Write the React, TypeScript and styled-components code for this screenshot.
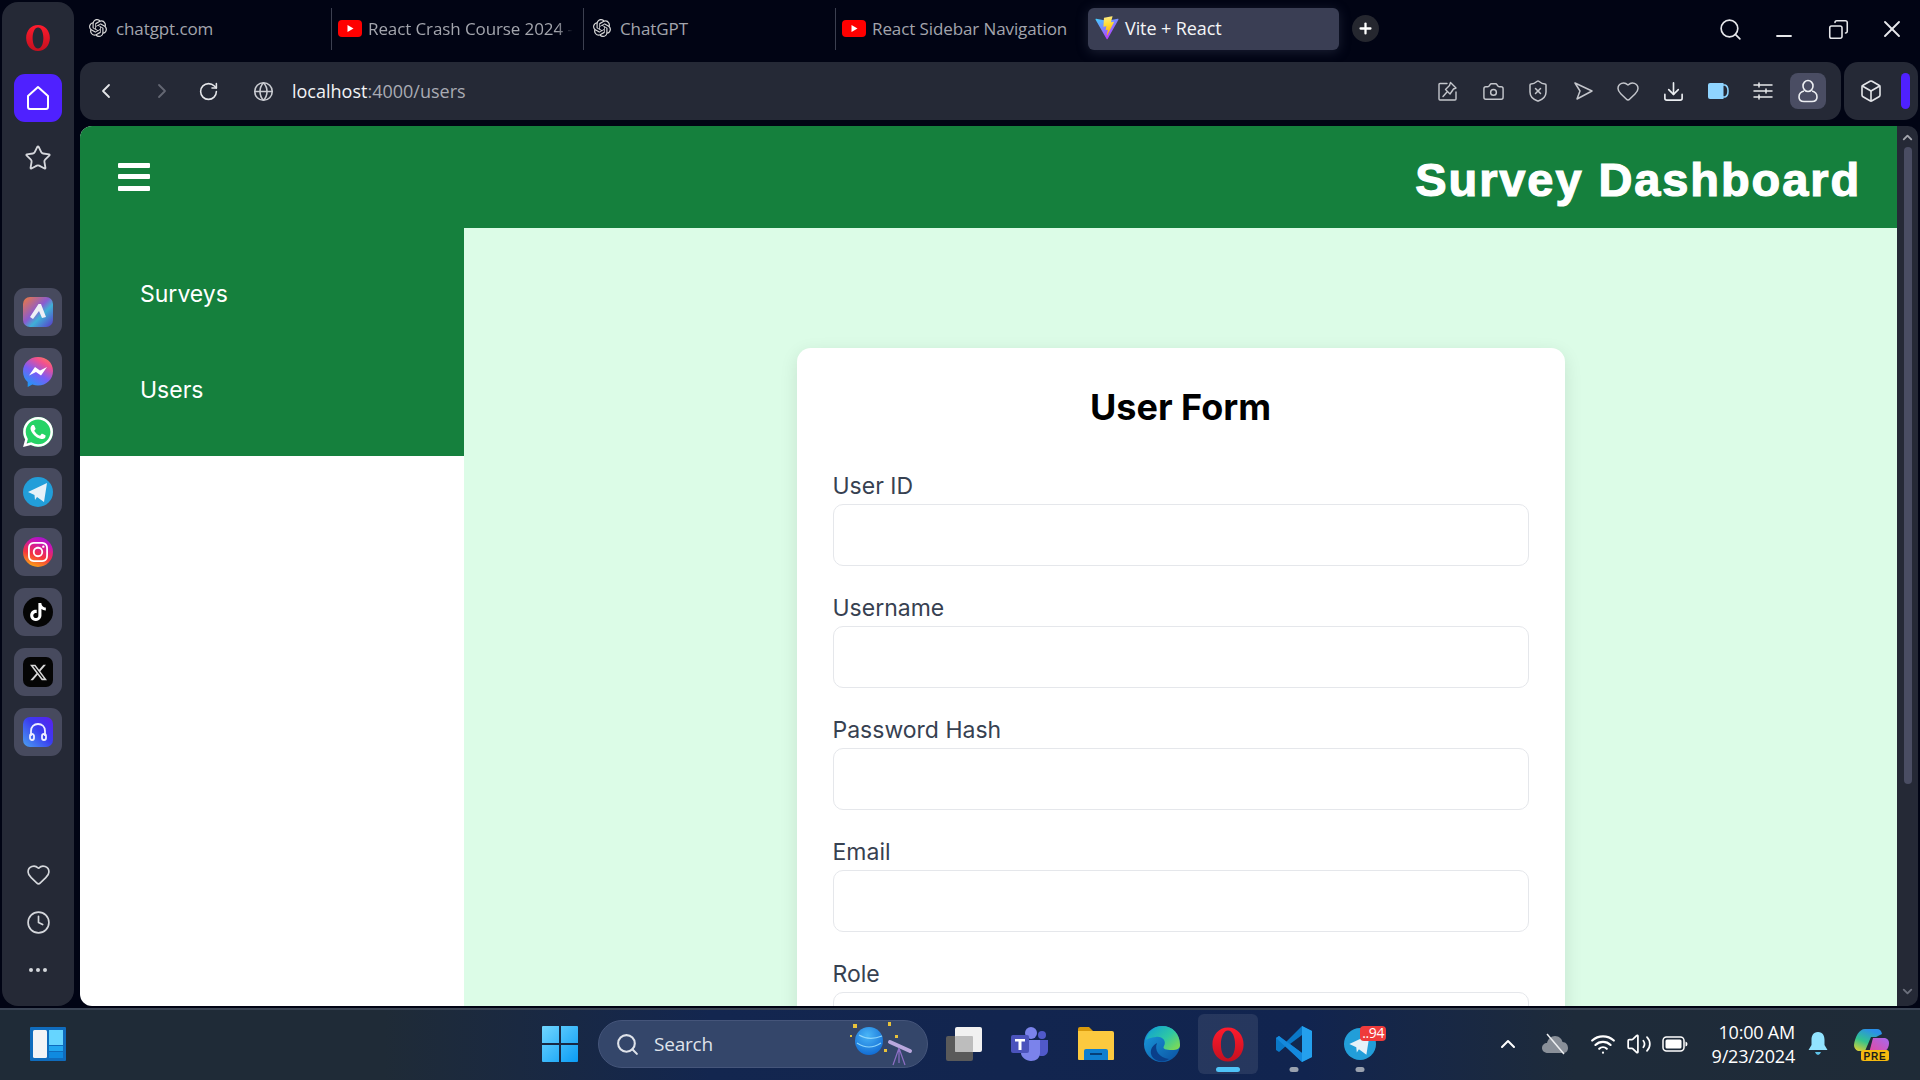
import React from 'react';
import styled, { createGlobalStyle } from 'styled-components';
import {
  Box,
  ChevronDown,
  ChevronLeft,
  ChevronRight,
  ChevronUp,
  Camera,
  Clock,
  Copy,
  Download,
  Globe,
  Heart,
  Minus,
  Plus,
  RotateCw,
  Search,
  ShieldX,
  Star,
  Volume2,
  Wifi,
  X,
} from 'lucide-react';
import { SiOpenai, SiTiktok, SiWhatsapp, SiX, SiInstagram } from 'react-icons/si';

const GlobalStyle = createGlobalStyle`
  html, body {
    margin: 0;
    padding: 0;
    background: #010414;
    overflow: hidden;
  }
  * {
    box-sizing: border-box;
  }
`;

const Screen = styled.div`
  width: 1920px;
  height: 1080px;
  display: flex;
  flex-direction: column;
  overflow: hidden;
  background: #010414;
  font-family: 'Open Sans', 'Liberation Sans', sans-serif;
`;

const Desktop = styled.div`
  height: 1008px;
  display: flex;
  flex-shrink: 0;
`;

/* opera side rail */
const Rail = styled.aside`
  width: 72px;
  height: 1004px;
  margin: 2px 6px 0 2px;
  padding: 12px 0;
  background: #252936;
  border-radius: 16px;
  display: flex;
  flex-direction: column;
  align-items: center;
`;

const RailGroup = styled.div<{ $top?: number; $gap?: number }>`
  display: flex;
  flex-direction: column;
  gap: ${(p) => p.$gap ?? 12}px;
  margin-top: ${(p) => (p.$top === undefined ? 'auto' : `${p.$top}px`)};
`;

const RailSlot = styled.div<{ $active?: boolean; $tile?: boolean }>`
  width: 48px;
  height: 48px;
  display: flex;
  align-items: center;
  justify-content: center;
  border-radius: 11px;
  color: #d5d7dc;
  background: ${(p) => (p.$active ? '#4f21ff' : p.$tile ? '#474a5e' : 'transparent')};
`;

const AppIcon = styled.div<{ $bg: string; $round?: boolean }>`
  width: 30px;
  height: 30px;
  display: flex;
  align-items: center;
  justify-content: center;
  color: #fff;
  background: ${(p) => p.$bg};
  border-radius: ${(p) => (p.$round ? '50%' : '7px')};
`;

const Dots = styled.div`
  display: flex;
  gap: 3px;

  span {
    width: 4px;
    height: 4px;
    border-radius: 50%;
    background: #d5d7dc;
  }
`;

/* browser */
const Browser = styled.div`
  flex: 1;
  min-width: 0;
  display: flex;
  flex-direction: column;
`;

const TabRow = styled.div`
  height: 62px;
  flex-shrink: 0;
  display: flex;
  padding: 8px 1px 0 0;
  margin-left: -1px;
`;

const Tab = styled.div<{ $active?: boolean; $divider?: boolean }>`
  width: ${(p) => (p.$active ? 251 : 252)}px;
  height: 42px;
  margin-left: ${(p) => (p.$active ? 1 : 0)}px;
  padding: 0 6px 2px ${(p) => (p.$active ? 6 : 6)}px;
  display: flex;
  align-items: center;
  gap: 6px;
  font-size: ${(p) => (p.$active ? 18 : 17)}px;
  color: ${(p) => (p.$active ? '#f4f5f7' : '#a3a5ad')};
  background: ${(p) => (p.$active ? '#3a3e54' : 'transparent')};
  border-radius: ${(p) => (p.$active ? '6px' : '0')};
  box-shadow: ${(p) => (p.$active ? '0 2px 12px rgba(60, 64, 88, 0.45)' : 'none')};
  border-left: ${(p) => (p.$divider ? '1px solid #3c4050' : '1px solid transparent')};
`;

const TabIcon = styled.div`
  width: 24px;
  height: 24px;
  flex-shrink: 0;
  display: flex;
  align-items: center;
  justify-content: center;
  color: #d8d8d8;
`;

const TabTitle = styled.span<{ $fade?: boolean }>`
  white-space: nowrap;
  letter-spacing: -0.1px;
  ${(p) => (p.$fade ? 'mask-image: linear-gradient(90deg, #000 92%, transparent 100%);' : '')}
`;

const NewTab = styled.div`
  width: 27px;
  height: 27px;
  margin: 7px 0 0 13px;
  border-radius: 50%;
  background: #25272f;
  color: #fff;
  display: flex;
  align-items: center;
  justify-content: center;
`;

const WindowControls = styled.div`
  margin-left: auto;
  display: flex;
  color: #e6e7ea;
`;

const WindowButton = styled.div`
  width: 54px;
  height: 42px;
  display: flex;
  align-items: center;
  justify-content: center;
`;

const AddressRow = styled.div`
  height: 58px;
  flex-shrink: 0;
  display: flex;
  gap: 3px;
  padding-right: 2px;
`;

const Toolbar = styled.div`
  flex: 1;
  min-width: 0;
  padding: 0 15px 0 14px;
  display: flex;
  align-items: center;
  background: #252936;
  border-radius: 14px;
`;

const NavIcon = styled.div<{ $left?: number; $dim?: boolean }>`
  width: 24px;
  height: 24px;
  margin-left: ${(p) => p.$left ?? 0}px;
  display: flex;
  align-items: center;
  justify-content: center;
  color: ${(p) => (p.$dim ? '#646773' : '#e4e5e9')};
`;

const Url = styled.div`
  margin-left: 17px;
  font-size: 18px;
  color: #a9abb3;

  b {
    font-weight: 400;
    color: #f2f3f5;
  }
`;

const ToolActions = styled.div`
  margin-left: auto;
  display: flex;
  align-items: center;
  gap: 21px;
  color: #c4c6cc;
`;

const ToolIcon = styled.div`
  width: 24px;
  height: 24px;
  display: flex;
  align-items: center;
  justify-content: center;
`;

const Profile = styled.div`
  width: 36px;
  height: 36px;
  margin-left: -6px;
  border-radius: 8px;
  background: #4a4d63;
  color: #eceef2;
  display: flex;
  align-items: center;
  justify-content: center;
`;

const ExtPanel = styled.div`
  width: 74px;
  padding-left: 15px;
  display: flex;
  align-items: center;
  gap: 18px;
  background: #252936;
  border-radius: 14px;
  color: #e4e5e9;
`;

const ExtBar = styled.div`
  width: 9px;
  height: 36px;
  border-radius: 5px;
  background: #4f21ff;
`;

const Viewport = styled.div`
  height: 880px;
  margin-top: 6px;
  margin-right: 2px;
  display: flex;
  min-height: 0;
`;

const Page = styled.main`
  flex: 1;
  min-width: 0;
  display: flex;
  flex-direction: column;
  overflow: hidden;
  background: #fff;
  border-radius: 12px 0 0 12px;
`;

const Header = styled.header`
  height: 102px;
  flex-shrink: 0;
  padding: 0 36px 0 38px;
  display: flex;
  align-items: center;
  justify-content: space-between;
  background: #15803d;
  color: #fff;
`;

const Hamburger = styled.div`
  display: flex;
  flex-direction: column;
  gap: 6.5px;
  margin-top: -1px;

  span {
    display: block;
    width: 32px;
    height: 5px;
    background: #fff;
    border-radius: 1px;
  }
`;

const Title = styled.h1`
  margin: 4px 0 0;
  font-family: 'Liberation Sans', Arial, sans-serif;
  font-size: 47px;
  font-weight: 700;
  letter-spacing: 1.9px;
  -webkit-text-stroke: 1.2px #fff;
`;

const Body = styled.div`
  flex: 1;
  min-height: 0;
  display: flex;
`;

const SideNav = styled.nav`
  width: 384px;
  flex-shrink: 0;
`;

const NavList = styled.div`
  height: 228px;
  padding: 18px 0 0 60px;
  background: #15803d;
`;

const NavLink = styled.a`
  display: flex;
  align-items: center;
  height: 96px;
  font-family: 'Inter', 'Liberation Sans', sans-serif;
  font-size: 23px;
  color: #fff;
`;

const Content = styled.div`
  flex: 1;
  min-width: 0;
  padding-top: 120px;
  display: flex;
  justify-content: center;
  background: #dcfce7;
  overflow: hidden;
`;

const Card = styled.form`
  width: 768px;
  height: 900px;
  flex-shrink: 0;
  padding: 35px 36px;
  background: #fff;
  border-radius: 14px;
  box-shadow: 0 5px 18px rgba(0, 0, 0, 0.1);
  font-family: 'Inter', 'Liberation Sans', sans-serif;
`;

const CardTitle = styled.h2`
  margin: 0 0 41px;
  font-size: 36px;
  line-height: 48px;
  font-weight: 700;
  text-align: center;
  color: #000;
`;

const Fields = styled.div`
  display: flex;
  flex-direction: column;
  gap: 28px;
`;

const Field = styled.div`
  display: flex;
  flex-direction: column;
  gap: 4px;
`;

const Label = styled.label`
  font-size: 23px;
  line-height: 28px;
  color: #374151;
`;

const Input = styled.input`
  height: 62px;
  width: 100%;
  border: 1px solid #e5e7eb;
  border-radius: 10px;
  background: #fff;
  outline: none;
`;

const ScrollBar = styled.div`
  width: 21px;
  padding: 4px 0 2px;
  display: flex;
  flex-direction: column;
  align-items: center;
  background: #252936;
  border-radius: 0 10px 10px 0;
  color: #a4a6ae;
`;

const ScrollThumb = styled.div`
  width: 8px;
  height: 637px;
  margin-top: 2px;
  border-radius: 4px;
  background: #4a4d63;
`;

const ScrollEnd = styled.div`
  margin-top: auto;
`;

/* windows taskbar */
const Taskbar = styled.footer`
  height: 72px;
  flex-shrink: 0;
  display: flex;
  align-items: flex-start;
  padding: 4px 29px 0 30px;
  border-top: 2px solid #3a4454;
  background: linear-gradient(90deg, #1f2b37 0%, #1f2b37 20%, #13264f 37%, #11244f 68%, #1e2b3a 82%, #1f2b37 100%);
`;

const Widgets = styled.div`
  width: 36px;
  height: 60px;
  display: flex;
  align-items: center;
`;

const TaskSlot = styled.div<{ $active?: boolean; $left?: number }>`
  width: 60px;
  height: 60px;
  flex-shrink: 0;
  margin-left: ${(p) => p.$left ?? 0}px;
  position: relative;
  display: flex;
  align-items: center;
  justify-content: center;
  border-radius: 6px;
  background: ${(p) => (p.$active ? 'rgba(255, 255, 255, 0.09)' : 'transparent')};
`;

const TaskDot = styled.span<{ $active?: boolean }>`
  position: absolute;
  bottom: 2px;
  left: 50%;
  transform: translateX(-50%);
  width: ${(p) => (p.$active ? 24 : 9)}px;
  height: 5px;
  border-radius: 3px;
  background: ${(p) => (p.$active ? '#4fc3f7' : '#9aa1ae')};
`;

const TaskBadge = styled.span`
  position: absolute;
  top: 12px;
  right: 4px;
  padding: 0 2px;
  height: 15px;
  line-height: 14px;
  border-radius: 4px;
  background: #ef3b3b;
  color: #fff;
  font-size: 14px;
  font-family: 'Open Sans', sans-serif;
  letter-spacing: -0.4px;
`;

const SearchPill = styled.div`
  width: 330px;
  height: 48px;
  flex-shrink: 0;
  margin: 6px 0 0 8px;
  padding: 0 12px 0 16px;
  display: flex;
  align-items: center;
  border-radius: 24px;
  background: #34466a;
  border: 1px solid #45557a;
  color: #dfe3ea;
  font-size: 19px;
`;

const SearchLabel = styled.span`
  flex: 1;
  margin-left: 14px;
  letter-spacing: -0.2px;
`;

const Tray = styled.div`
  margin-left: auto;
  height: 60px;
  display: flex;
  align-items: center;
  color: #fff;
`;

const TrayItem = styled.div<{ $left: number; $width: number }>`
  width: ${(p) => p.$width}px;
  margin-left: ${(p) => p.$left}px;
  display: flex;
  align-items: center;
  justify-content: center;
  flex-shrink: 0;
`;

const Clock24 = styled.div`
  width: 100px;
  margin-left: 7px;
  text-align: right;
  font-size: 18px;
  line-height: 24px;
  letter-spacing: -0.2px;
  color: #fff;
  flex-shrink: 0;
`;

const OperaMark = ({ width, height }: { width: number; height: number }) => (
  <svg width={width} height={height} viewBox="0 0 24 26">
    <defs>
      <linearGradient id={`op${width}`} x1="0" y1="0" x2="0" y2="1">
        <stop offset="0" stopColor="#ff1b2d" />
        <stop offset="1" stopColor="#c4101f" />
      </linearGradient>
    </defs>
    <path
      fillRule="evenodd"
      fill={`url(#op${width})`}
      d="M12 1C5.400 1 1 6.400 1 13s4.400 12 11 12 11-5.400 11-12S18.600 1 12 1zM12 3.200c-3 0-5 4.400-5 9.800s2 9.800 5 9.800 5-4.400 5-9.800S15 3.200 12 3.200z"
    />
  </svg>
);

const HomeGlyph = () => (
  <svg width="24" height="26" viewBox="0 0 24 26" fill="none" stroke="#fff" strokeWidth="2" strokeLinejoin="round">
    <path d="M12 2 L22 11 V22 Q22 24 20 24 H4 Q2 24 2 22 V11 Z" />
  </svg>
);

const YoutubeIcon = () => (
  <svg width="24" height="17" viewBox="0 0 24 17">
    <rect width="24" height="17" rx="4" fill="#f00" />
    <path d="M9.500 5 L15.500 8.500 L9.500 12 Z" fill="#fff" />
  </svg>
);

const ViteIcon = () => (
  <svg width="24" height="24" viewBox="0 0 410 404">
    <defs>
      <linearGradient id="viteA" x1="0" y1="0" x2="0.6" y2="1">
        <stop offset="0" stopColor="#41d1ff" />
        <stop offset="1" stopColor="#bd34fe" />
      </linearGradient>
      <linearGradient id="viteB" x1="0.4" y1="0" x2="0.5" y2="1">
        <stop offset="0" stopColor="#ffea83" />
        <stop offset="0.4" stopColor="#ffdd35" />
        <stop offset="1" stopColor="#ffa800" />
      </linearGradient>
    </defs>
    <path
      fill="url(#viteA)"
      d="M399.641 59.5246L215.643 388.545C211.844 395.338 202.084 395.378 198.228 388.618L10.5817 59.5563C6.38087 52.1896 12.6802 43.2665 21.0281 44.7586L205.223 77.6824C206.398 77.8924 207.601 77.8904 208.776 77.6763L389.119 44.8058C397.439 43.2894 403.768 52.1434 399.641 59.5246Z"
    />
    <path
      fill="url(#viteB)"
      d="M292.965 1.5744L156.801 28.2552C154.563 28.6937 152.906 30.5903 152.771 32.8664L144.395 174.33C144.198 177.662 147.258 180.248 150.51 179.498L188.42 170.749C191.967 169.931 195.172 173.055 194.443 176.622L183.18 231.775C182.422 235.487 185.907 238.661 189.532 237.56L212.947 230.446C216.577 229.344 220.065 232.527 219.297 236.242L201.398 322.875C200.278 328.294 207.486 331.249 210.492 326.603L212.5 323.5L323.454 102.072C325.312 98.3645 322.108 94.137 318.036 94.9228L279.014 102.454C275.347 103.161 272.227 99.746 273.262 96.1583L298.731 7.86689C299.767 4.27314 296.636 0.855181 292.965 1.5744Z"
    />
  </svg>
);

const PinNoteIcon = () => (
  <svg width="20" height="20" viewBox="0 0 20 20" fill="none" stroke="currentColor" strokeWidth="1.4" strokeLinejoin="round" strokeLinecap="round">
    <path d="M9 2.500 H2 Q1 2.500 1 3.500 V18 Q1 19 2 19 H17 Q18 19 18 18 V11" />
    <path d="M12.500 1.500 L18 7 L15.500 8 L12 13 L7.500 8.500 L11.500 4.500 Z" />
    <path d="M9 11 L5 15.500" />
  </svg>
);

const SendIcon = () => (
  <svg width="20" height="20" viewBox="0 0 20 20" fill="none" stroke="currentColor" strokeWidth="1.5" strokeLinejoin="round">
    <path d="M2 2 L19 10 L4 18 L7 10 Z" />
  </svg>
);

const WalletIcon = () => (
  <svg width="22" height="18" viewBox="0 0 22 18">
    <path d="M3 1 H15 Q16 1 16 2 V16 Q16 17 15 17 H3 Q1 17 1 15 V3 Q1 1 3 1Z" fill="#8fd4ff" />
    <path d="M16 3 H18 Q21 4 21 9 Q21 14 18 15 H16" fill="none" stroke="#8fd4ff" strokeWidth="1.6" />
    <rect x="14" y="1" width="2.500" height="16" fill="#8fd4ff" />
  </svg>
);

const EasySetupIcon = () => (
  <svg width="20" height="18" viewBox="0 0 20 18" fill="none" stroke="#e8e9ec" strokeWidth="1.5" strokeLinecap="round">
    <path d="M1 3 H19M1 9 H19M1 15 H19" />
    <path d="M6 1 V5M13 7 V11M6 13 V17" />
  </svg>
);

const PersonIcon = () => (
  <svg width="22" height="24" viewBox="0 0 22 24" fill="none" stroke="currentColor" strokeWidth="1.6">
    <ellipse cx="11" cy="7" rx="5" ry="5.500" />
    <path d="M7 12 C3 13 2 16 2 18 C2 21 4 22.500 7 22.500 H15 C18 22.500 20 21 20 18 C20 16 19 13 15 12" />
  </svg>
);

const AriaIcon = () => (
  <AppIcon $bg="linear-gradient(135deg, #f07a3a 0%, #8a5bd0 45%, #3fb0d6 62%, #5a35c8 100%)">
    <svg width="18" height="18" viewBox="0 0 18 18" fill="#eef0f6">
      <path d="M9.500 1 L12 1 L17 14 L13 15 L10 8 L4 16 L1 14 Z" />
    </svg>
  </AppIcon>
);

const MessengerIcon = () => (
  <svg width="30" height="30" viewBox="0 0 30 30">
    <defs>
      <linearGradient id="msgGrad" x1="0.2" y1="1" x2="0.8" y2="0">
        <stop offset="0" stopColor="#1a9cf5" />
        <stop offset="0.45" stopColor="#7a5cf6" />
        <stop offset="0.8" stopColor="#f2508f" />
        <stop offset="1" stopColor="#fb7a5c" />
      </linearGradient>
    </defs>
    <path fill="url(#msgGrad)" d="M15 0C6.500 0 0 6.200 0 14.500c0 4.300 1.800 8 4.700 10.600V30l4.600-2.500c1.800.6 3.700.9 5.700.9 8.500 0 15-6.200 15-14.500S23.500 0 15 0z" />
    <path fill="#fff" d="M6 18.500 L12 10 L17 13.500 L24 10 L18 18.500 L13 15 Z" />
  </svg>
);

const TelegramPlane = ({ size }: { size: number }) => (
  <svg width={size} height={size} viewBox="0 0 30 30">
    <circle cx="15" cy="15" r="15" fill="#229ed9" />
    <path fill="#e6f1f8" d="M5 15 L24 6 L21 25 L14 20 L12 23 L11.500 18 Z" />
  </svg>
);

const SoundIcon = () => (
  <AppIcon $bg="linear-gradient(45deg, #4aa0f0 0%, #3a3cf0 55%, #5a1ff0 100%)">
    <svg width="22" height="22" viewBox="0 0 22 22" fill="none" stroke="#eef" strokeWidth="1.8">
      <path d="M4 15 V10 C4 5.500 7 3 11 3 C15 3 18 5.500 18 10 V15" />
      <rect x="3" y="13" width="4" height="6" rx="2" />
      <rect x="15" y="13" width="4" height="6" rx="2" />
    </svg>
  </AppIcon>
);

const WidgetsIcon = () => (
  <svg width="36" height="34" viewBox="0 0 36 34">
    <rect width="36" height="34" rx="1" fill="#0f6cbd" />
    <rect x="3" y="3" width="14" height="28" rx="1.500" fill="#f3f4f6" />
    <rect x="19" y="3" width="14" height="15" fill="#66d5ff" />
    <rect x="19" y="19" width="14" height="5" fill="#22a7f0" />
    <rect x="19" y="25" width="14" height="6" fill="#0f8ae0" />
  </svg>
);

const WindowsIcon = () => (
  <svg width="36" height="36" viewBox="0 0 36 36">
    <defs>
      <linearGradient id="winGrad" x1="0" y1="0" x2="1" y2="1">
        <stop offset="0" stopColor="#70d6ff" />
        <stop offset="1" stopColor="#0a9cf5" />
      </linearGradient>
    </defs>
    <path fill="url(#winGrad)" d="M0 1 Q0 0 1 0 H17 V17 H0ZM19 0 H35 Q36 0 36 1 V17 H19ZM0 19 H17 V36 H1 Q0 36 0 35ZM19 19 H36 V35 Q36 36 35 36 H19Z" />
  </svg>
);

const PlanetArt = () => (
  <svg width="66" height="46" viewBox="0 0 66 46">
    <defs>
      <radialGradient id="planet" cx="0.45" cy="0.3" r="0.8">
        <stop offset="0" stopColor="#49b5f7" />
        <stop offset="1" stopColor="#0b63d0" />
      </radialGradient>
    </defs>
    <circle cx="20" cy="20" r="14" fill="url(#planet)" />
    <path d="M8 22 Q20 30 32 22M10 14 Q20 20 33 15" stroke="#8ed6fb" strokeWidth="1.200" fill="none" />
    <path d="M4 3h4v4H4zM39 1h3v4h-3zM46 14h3v3h-3zM1 14h2v2H1zM35 28h3v3h-3z" fill="#e8c23a" />
    <path d="M41 21 L61 30" stroke="#b9a8dd" strokeWidth="4" strokeLinecap="round" />
    <path d="M50 27 L44 44M50 27 L56 44M50 27 V42" stroke="#8d6fc4" strokeWidth="1.200" />
  </svg>
);

const TaskViewIcon = () => (
  <svg width="36" height="34" viewBox="0 0 36 34">
    <rect x="0" y="9" width="27" height="25" rx="2" fill="#5a5a5a" />
    <rect x="9" y="0" width="27" height="25" rx="2" fill="#f1f1f1" />
    <rect x="9" y="9" width="18" height="16" rx="1" fill="#bdbdbd" />
  </svg>
);

const TeamsIcon = () => (
  <svg width="38" height="34" viewBox="0 0 38 34">
    <circle cx="20" cy="6" r="6" fill="#7b83eb" />
    <circle cx="31" cy="8" r="4" fill="#5059c9" />
    <path d="M24 13 H37 V23 C37 27 34 29 31 29 C28 29 24 27 24 23Z" fill="#5059c9" />
    <path d="M10 13 H29 V26 C29 31 25 34 20 34 C15 34 10 30 10 26Z" fill="#7b83eb" />
    <rect x="0" y="8" width="18" height="18" rx="2" fill="#4b53bc" />
    <path d="M4 12 H14 V14.500 H10.500 V23 H7.500 V14.500 H4Z" fill="#fff" />
  </svg>
);

const ExplorerIcon = () => (
  <svg width="36" height="34" viewBox="0 0 36 34">
    <path d="M0 2 Q0 0 2 0 H11 L15 4 H0Z" fill="#d99a0c" />
    <path d="M0 4 H34 Q36 4 36 6 V32 Q36 33 35 33 H1 Q0 33 0 32Z" fill="#fcc93f" />
    <path d="M6 33 V24 Q6 22 8 22 H28 Q30 22 30 24 V33Z" fill="#0f7fd0" />
    <rect x="12" y="26" width="12" height="2" fill="#063f78" />
  </svg>
);

const EdgeIcon = () => (
  <svg width="36" height="36" viewBox="0 0 36 36">
    <defs>
      <linearGradient id="edgeA" x1="0" y1="0" x2="1" y2="0.8">
        <stop offset="0" stopColor="#0d9bd8" />
        <stop offset="0.6" stopColor="#2ec8a4" />
        <stop offset="1" stopColor="#7ad958" />
      </linearGradient>
      <linearGradient id="edgeB" x1="0" y1="0" x2="1" y2="1">
        <stop offset="0" stopColor="#1a9fe0" />
        <stop offset="1" stopColor="#0b4fa0" />
      </linearGradient>
    </defs>
    <circle cx="18" cy="18" r="18" fill="url(#edgeB)" />
    <path d="M2 14 C4 5 11 0 18 0 C29 0 36 8 36 19 C36 23 33 24 28 24 C22 24 18 23 20 20 C23 15 18 10 12 11 C7 11.500 3 13 2 14Z" fill="url(#edgeA)" />
    <path d="M13 17 C10 24 15 32 25 33 C21 36 16 36 12 34 C6 31 4 22 13 17Z" fill="#0a3f8a" />
  </svg>
);

const VsCodeIcon = () => (
  <svg width="36" height="36" viewBox="0 0 36 36">
    <path d="M26 0 L36 5 V31 L26 36 L10 20 L3 26 L0 24 V12 L3 10 L10 16Z" fill="#0a78c8" />
    <path d="M26 0 L36 5 V31 L26 36 Z" fill="#24a0ed" />
    <path d="M26 9 V27 L14 18Z" fill="#11284f" />
    <path d="M0 12 L3 10 L26 27 V36 Z" fill="#1489dd" />
  </svg>
);

const CloudOffIcon = () => (
  <svg width="28" height="22" viewBox="0 0 28 22">
    <path d="M7 20 C3 20 1 17.500 1 15 C1 12 3.500 10 6 10 C7 6 10 3 14 3 C18 3 21 6 21.500 9 C25 9 27 12 27 15 C27 18 25 20 22 20Z" fill="#8a9099" />
    <path d="M6 1 L23 21" stroke="#eef0f2" strokeWidth="1.500" />
  </svg>
);

const BatteryIcon = () => (
  <svg width="26" height="18" viewBox="0 0 26 18" fill="none">
    <rect x="1" y="2" width="21" height="14" rx="3.500" stroke="#fff" strokeWidth="1.500" />
    <rect x="3.500" y="4.500" width="16" height="9" rx="1.500" fill="#fff" />
    <path d="M23.500 6.500 Q25.500 7 25.500 9 Q25.500 11 23.500 11.500Z" fill="#fff" />
  </svg>
);

const BellIcon = () => (
  <svg width="20" height="24" viewBox="0 0 20 24">
    <path d="M10 0 C5 0 3.500 4 3.500 8 V13 L0.500 18 H19.500 L16.500 13 V8 C16.500 4 15 0 10 0Z" fill="#92e4ff" />
    <path d="M7 20 H13 Q12 23 10 23 Q8 23 7 20Z" fill="#5ec3e8" />
  </svg>
);

const CopilotIcon = () => (
  <svg width="38" height="34" viewBox="0 0 38 34">
    <defs>
      <linearGradient id="copA" x1="0" y1="1" x2="0.5" y2="0">
        <stop offset="0" stopColor="#f0d02a" />
        <stop offset="0.5" stopColor="#32c48d" />
        <stop offset="1" stopColor="#2a8fe8" />
      </linearGradient>
      <linearGradient id="copB" x1="0" y1="1" x2="1" y2="0">
        <stop offset="0" stopColor="#e8479a" />
        <stop offset="1" stopColor="#a56af0" />
      </linearGradient>
    </defs>
    <path d="M12 2 H24 Q28 2 29 7 L23 10 H18 L12 24 H5 Q1 22 1 18 C2 10 6 2 12 2Z" fill="url(#copA)" />
    <path d="M20 11 H32 Q36 12 36 16 C36 22 32 26 26 26 H16 Z" fill="url(#copB)" />
    <rect x="8" y="23" width="28" height="11" rx="2.500" fill="#f5b90f" />
    <text x="22" y="32.500" textAnchor="middle" fontSize="10" fontWeight="700" fontFamily="Liberation Sans, sans-serif" letterSpacing="0.8" fill="#1c1c1c">PRE</text>
  </svg>
);

const formFields = ['User ID', 'Username', 'Password Hash', 'Email', 'Role'];

const App: React.FC = () => {
  return (
    <Screen>
      <GlobalStyle />
      <Desktop>
        <Rail>
          <RailGroup $top={0}>
            <RailSlot><OperaMark width={26} height={28} /></RailSlot>
            <RailSlot $active><HomeGlyph /></RailSlot>
            <RailSlot><Star size={28} strokeWidth={1.6} /></RailSlot>
          </RailGroup>
          <RailGroup $top={106}>
            <RailSlot $tile><AriaIcon /></RailSlot>
            <RailSlot $tile><MessengerIcon /></RailSlot>
            <RailSlot $tile><AppIcon $bg="#25d366" $round><SiWhatsapp size={30} color="#fff" /></AppIcon></RailSlot>
            <RailSlot $tile><TelegramPlane size={30} /></RailSlot>
            <RailSlot $tile>
              <AppIcon $bg="linear-gradient(20deg, #fdc60a 0%, #f5343e 40%, #c913b9 75%, #8a19d6 100%)" $round>
                <SiInstagram size={20} color="#fff" />
              </AppIcon>
            </RailSlot>
            <RailSlot $tile><AppIcon $bg="#050505" $round><SiTiktok size={18} color="#fff" /></AppIcon></RailSlot>
            <RailSlot $tile><AppIcon $bg="#050505"><SiX size={17} color="#d8d8d8" /></AppIcon></RailSlot>
            <RailSlot $tile><SoundIcon /></RailSlot>
          </RailGroup>
          <RailGroup $gap={0}>
            <RailSlot><Heart size={25} strokeWidth={1.6} /></RailSlot>
            <RailSlot><Clock size={25} strokeWidth={1.6} /></RailSlot>
            <RailSlot><Dots><span /><span /><span /></Dots></RailSlot>
          </RailGroup>
        </Rail>

        <Browser>
          <TabRow>
            <Tab>
              <TabIcon><SiOpenai size={18} /></TabIcon>
              <TabTitle>chatgpt.com</TabTitle>
            </Tab>
            <Tab $divider>
              <TabIcon><YoutubeIcon /></TabIcon>
              <TabTitle $fade>React Crash Course 2024 -</TabTitle>
            </Tab>
            <Tab $divider>
              <TabIcon><SiOpenai size={18} /></TabIcon>
              <TabTitle>ChatGPT</TabTitle>
            </Tab>
            <Tab $divider>
              <TabIcon><YoutubeIcon /></TabIcon>
              <TabTitle>React Sidebar Navigation</TabTitle>
            </Tab>
            <Tab $active>
              <TabIcon><ViteIcon /></TabIcon>
              <TabTitle>Vite + React</TabTitle>
            </Tab>
            <NewTab><Plus size={17} strokeWidth={3.2} /></NewTab>
            <WindowControls>
              <WindowButton><Search size={25} strokeWidth={1.6} /></WindowButton>
              <WindowButton><Minus size={24} strokeWidth={1.8} style={{ marginTop: 14 }} /></WindowButton>
              <WindowButton><Copy size={21} strokeWidth={1.8} style={{ transform: 'scaleX(-1)' }} /></WindowButton>
              <WindowButton><X size={28} strokeWidth={1.6} /></WindowButton>
            </WindowControls>
          </TabRow>

          <AddressRow>
            <Toolbar>
              <NavIcon><ChevronLeft size={24} strokeWidth={1.8} /></NavIcon>
              <NavIcon $left={32} $dim><ChevronRight size={24} strokeWidth={1.8} /></NavIcon>
              <NavIcon $left={22}><RotateCw size={21} strokeWidth={1.8} /></NavIcon>
              <NavIcon $left={31}><Globe size={21} strokeWidth={1.8} color="#c9cbd1" /></NavIcon>
              <Url><b>localhost</b>:4000/users</Url>
              <ToolActions>
                <ToolIcon><PinNoteIcon /></ToolIcon>
                <ToolIcon><Camera size={23} strokeWidth={1.5} /></ToolIcon>
                <ToolIcon><ShieldX size={24} strokeWidth={1.5} /></ToolIcon>
                <ToolIcon><SendIcon /></ToolIcon>
                <ToolIcon><Heart size={24} strokeWidth={1.5} /></ToolIcon>
                <ToolIcon><Download size={23} strokeWidth={1.7} color="#eceef2" /></ToolIcon>
                <ToolIcon><WalletIcon /></ToolIcon>
                <ToolIcon><EasySetupIcon /></ToolIcon>
                <Profile><PersonIcon /></Profile>
              </ToolActions>
            </Toolbar>
            <ExtPanel>
              <Box size={24} strokeWidth={1.6} />
              <ExtBar />
            </ExtPanel>
          </AddressRow>

          <Viewport>
            <Page>
              <Header>
                <Hamburger><span /><span /><span /></Hamburger>
                <Title>Survey Dashboard</Title>
              </Header>
              <Body>
                <SideNav>
                  <NavList>
                    <NavLink>Surveys</NavLink>
                    <NavLink>Users</NavLink>
                  </NavList>
                </SideNav>
                <Content>
                  <Card>
                    <CardTitle>User Form</CardTitle>
                    <Fields>
                      {formFields.map((name) => (
                        <Field key={name}>
                          <Label>{name}</Label>
                          <Input type="text" />
                        </Field>
                      ))}
                    </Fields>
                  </Card>
                </Content>
              </Body>
            </Page>
            <ScrollBar>
              <ChevronUp size={15} strokeWidth={3} />
              <ScrollThumb />
              <ScrollEnd><ChevronDown size={15} strokeWidth={3} color="#6c6f7c" /></ScrollEnd>
            </ScrollBar>
          </Viewport>
        </Browser>
      </Desktop>

      <Taskbar>
        <Widgets><WidgetsIcon /></Widgets>
        <TaskSlot $left={464}><WindowsIcon /></TaskSlot>
        <SearchPill>
          <Search size={25} strokeWidth={2} />
          <SearchLabel>Search</SearchLabel>
          <PlanetArt />
        </SearchPill>
        <TaskSlot $left={6}><TaskViewIcon /></TaskSlot>
        <TaskSlot $left={6}><TeamsIcon /></TaskSlot>
        <TaskSlot $left={6}><ExplorerIcon /></TaskSlot>
        <TaskSlot $left={6}><EdgeIcon /></TaskSlot>
        <TaskSlot $left={6} $active>
          <OperaMark width={34} height={37} />
          <TaskDot $active />
        </TaskSlot>
        <TaskSlot $left={6}>
          <VsCodeIcon />
          <TaskDot />
        </TaskSlot>
        <TaskSlot $left={6}>
          <TelegramPlane size={32} />
          <TaskBadge>..94</TaskBadge>
          <TaskDot />
        </TaskSlot>
        <Tray>
          <TrayItem $left={0} $width={24}><ChevronUp size={24} strokeWidth={2} /></TrayItem>
          <TrayItem $left={19} $width={32}><CloudOffIcon /></TrayItem>
          <TrayItem $left={18} $width={28}><Wifi size={26} strokeWidth={2} /></TrayItem>
          <TrayItem $left={8} $width={28}><Volume2 size={26} strokeWidth={1.6} /></TrayItem>
          <TrayItem $left={9} $width={26}><BatteryIcon /></TrayItem>
          <Clock24>10:00 AM<br />9/23/2024</Clock24>
          <TrayItem $left={12} $width={22}><BellIcon /></TrayItem>
          <TrayItem $left={24} $width={38}><CopilotIcon /></TrayItem>
        </Tray>
      </Taskbar>
    </Screen>
  );
};

export default App;
